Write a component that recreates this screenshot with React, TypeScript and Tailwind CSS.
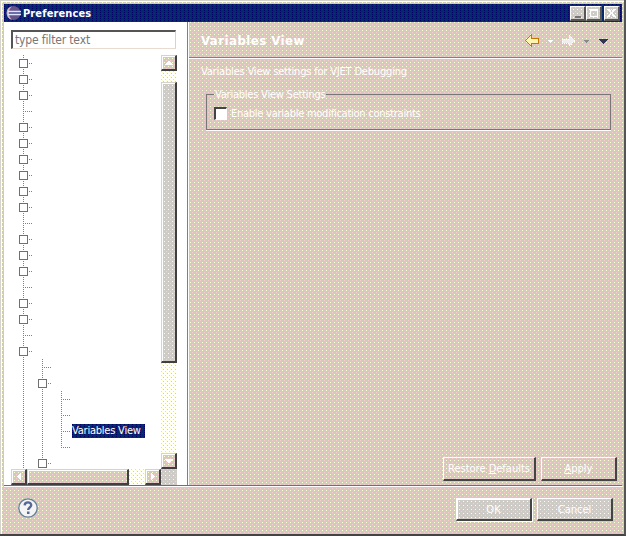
import type { ReactNode } from "react";

// Dithered fills of a 256-colour desktop.
const FACE =
  "bg-[#cecbc6] bg-[image:radial-gradient(circle_at_0.5px_0.5px,#ffcccc_0.6px,transparent_0.6px),radial-gradient(circle_at_0.5px_0.5px,#ffffcc_0.6px,transparent_0.6px)] bg-[length:4px_4px,4px_4px] bg-[position:0_0,2px_2px]";
const TRACK =
  "bg-white bg-[image:radial-gradient(circle_at_0.5px_0.5px,#ffcccc_0.6px,transparent_0.6px),radial-gradient(circle_at_0.5px_0.5px,#cccccc_0.6px,transparent_0.6px),radial-gradient(circle_at_0.5px_0.5px,#ffffcc_0.6px,transparent_0.6px)] bg-[length:4px_4px,4px_4px,4px_4px] bg-[position:0_0,2px_2px,1px_1px]";
const NAVY =
  "bg-[#03296a] bg-[image:radial-gradient(circle_at_0.5px_0.5px,#000066_0.6px,transparent_0.6px),radial-gradient(circle_at_0.5px_0.5px,#003399_0.6px,transparent_0.6px)] bg-[length:4px_2px,4px_4px] bg-[position:0_0,2px_1px]";
const RAISED =
  "border-t border-l border-t-[#d6d3ce] border-l-[#d6d3ce] border-r-[#404040] border-b-[#404040] border-r-2 border-b-2 shadow-[inset_1px_1px_0_#fff]";

type Row = { level: number; box?: boolean; label?: string };
const b = (level: number): Row => ({ level, box: true });
const n = (level: number): Row => ({ level });
const rows: Row[] = [
  b(0), b(0), b(0), n(0), b(0), b(0), b(0), b(0), b(0), b(0), n(0), b(0), b(0),
  b(0), n(0), b(0), b(0), n(0), b(0), n(1), b(1), n(2), n(2),
  { level: 2, label: "Variables View" }, n(2), b(1),
];

function TreeRow({ row, index }: { row: Row; index: number }) {
  const x = 12 + row.level * 19;
  return (
    <div className="flex h-4 shrink-0 items-center">
      <svg width={x + 11} height="16" className="shrink-0" shapeRendering="crispEdges">
        <g stroke="#808080" strokeDasharray="1 1" fill="none">
          <path d="M12.5 0V16" />
          {index >= 19 && <path d="M31.5 0V16" />}
          {row.level === 2 && <path d={index === 24 ? "M50.5 0V9" : "M50.5 0V16"} />}
          <path d={`M${x + 2} 8.5H${x + 10}`} />
        </g>
        {row.box && <rect x={x - 3.5} y="4.5" width="8" height="8" fill="#fff" stroke="#707070" />}
      </svg>
      {row.label && (
        <span className={`flex h-[14px] w-[73px] items-center text-[11px] whitespace-nowrap text-white ${NAVY}`}>
          <span className="tracking-[-0.22px]">{row.label}</span>
        </span>
      )}
    </div>
  );
}

function ScrollButton({ d }: { d: string }) {
  return (
    <div className={`h-4 w-4 shrink-0 ${FACE} ${RAISED}`}>
      <svg width="13" height="13" shapeRendering="crispEdges">
        <path d={d} fill="#fff" />
      </svg>
    </div>
  );
}

function Push({ className, children }: { className: string; children: ReactNode }) {
  return (
    <button className={`flex items-center justify-center text-[11px] leading-none whitespace-nowrap text-white ${FACE} border-t border-l border-t-white border-l-white border-r-2 border-b-2 border-r-[#444] border-b-[#444] ${className}`}>
      {children}
    </button>
  );
}

function Caption({ className = "", children }: { className?: string; children: ReactNode }) {
  return (
    <div className={`h-[15px] ${FACE} border-t border-l border-t-white border-l-white border-r-2 border-b-2 border-r-[#555] border-b-[#555] ${className}`}>
      <svg width="13" height="12" shapeRendering="crispEdges">{children}</svg>
    </div>
  );
}

export default function App() {
  return (
    <div className={`flex h-[536px] w-[626px] flex-col overflow-hidden border-r-2 border-b-2 border-r-[#555] border-b-[#444] pt-1 pl-1 font-['DejaVu_Sans_Condensed','DejaVu_Sans',sans-serif] [font-stretch:condensed] shadow-[inset_1px_1px_0_#d6d3ce,inset_2px_2px_0_#fff] ${FACE}`}>
      <header className={`mr-[2px] flex h-[18px] shrink-0 items-center ${NAVY}`}>
        <svg width="15" height="16" viewBox="0 0 15 16" className="ml-[2px]">
          <circle cx="7.5" cy="8" r="7" fill="#665588" />
          <path d="M6 1.2A7 7 0 0 0 6 14.8A9 9 0 0 1 6 1.2" fill="#d8b4c4" />
          <path d="M2 6.5H15M2 9.5H15" stroke="#dce4ff" strokeWidth="1.3" />
          <path d="M3 8H15" stroke="#5566aa" />
        </svg>
        <h1 className="ml-[2px] text-[11px] leading-none font-bold tracking-[0.12px] text-white">Preferences</h1>
        <div className="mr-[2px] ml-auto flex">
          <Caption className="w-4"><path d="M4 9H10V11H4Z" fill="#777" /></Caption>
          <Caption className="w-4"><path d="M3 2H11V10H3ZM4 4V9H10V4Z" fill="#fff" fillRule="evenodd" /></Caption>
          <Caption className="ml-[2px] w-4"><path d="M3 2L10 10M10 2L3 10" stroke="#fff" strokeWidth="1.8" /></Caption>
        </div>
      </header>

      <main className="mr-[2px] flex h-[463px] shrink-0">
        <aside className="flex w-[183px] shrink-0 flex-col bg-white pt-2 pl-[7px]">
          <input
            placeholder="type filter text"
            className="h-[19px] w-[165px] shrink-0 border-t-2 border-l-2 border-r border-b border-t-[#555] border-l-[#555] border-r-[#d6d3ce] border-b-[#e8dcd0] bg-white pl-[2px] text-[12px] tracking-[-0.15px] placeholder:text-[#777]"
          />
          <div className="mt-[6px] flex h-[414px] shrink-0">
            <div className="flex w-[150px] flex-col overflow-hidden">
              {rows.map((row, i) => <TreeRow key={i} row={row} index={i} />)}
            </div>
            <div className={`flex w-4 flex-col ${TRACK}`}>
              <ScrollButton d="M6 5H8V6H9V7H10V8H11V9H3V8H4V7H5V6H6Z" />
              <div className={`mt-[11px] h-[281px] ${FACE} ${RAISED}`} />
              <div className="mt-auto"><ScrollButton d="M3 5H11V6H10V7H9V8H8V9H6V8H5V7H4V6H3Z" /></div>
            </div>
          </div>
          <div className={`flex h-4 w-[166px] ${FACE}`}>
            <div className={`flex w-[150px] ${TRACK}`}>
              <ScrollButton d="M5 6H6V5H7V4H8V3H9V10H8V9H7V8H6V7H5Z" />
              <div className={`h-4 w-[102px] ${FACE} ${RAISED}`} />
              <div className="ml-auto"><ScrollButton d="M5 3H6V4H7V5H8V6H9V7H8V8H7V9H6V10H5Z" /></div>
            </div>
          </div>
        </aside>
        <div className="w-[2px] shrink-0 border-r border-l border-l-[#808080] border-r-white" />
        <section className="flex flex-1 flex-col text-[11px] leading-none text-white">
          <div className="flex h-[37px] shrink-0 items-center border-t border-b border-t-transparent border-b-white pl-3 shadow-[inset_0_-1px_0_#808080]">
            <h2 className="text-[13px] font-bold tracking-[0.5px]">Variables View</h2>
            <svg width="92" height="20" className="mr-[6px] ml-auto" shapeRendering="crispEdges">
              <path d="M1.5 9.5L7.5 3.5V7.5H14.5V12.5H7.5V15.5Z" fill="#fff3b0" stroke="#bf7900" />
              <path d="M24 9H29L26.5 12Z" fill="#fff" />
              <path d="M38 8H45V4L51 10L45 15V12H38Z" fill="#eeeeee" stroke="#fff" strokeDasharray="1 1" />
              <path d="M60 9H65L62.5 12Z" fill="#888" />
              <path d="M75 8H84L79.5 13Z" fill="#333355" />
            </svg>
          </div>
          <p className="mt-[6px] pl-3 leading-[13px] tracking-[-0.18px] whitespace-nowrap">Variables View settings for VJET Debugging</p>
          <fieldset className="mt-[10px] ml-[17px] h-[42px] w-[405px] border border-[#777] pl-[7px] shadow-[0_1px_0_#fff]">
            <legend className="px-[1px] leading-[13px] tracking-[-0.22px] whitespace-nowrap">Variables View Settings</legend>
            <label className="mt-[6px] flex items-center whitespace-nowrap">
              <span className="h-[13px] w-[13px] border-t-2 border-l-2 border-r border-b border-t-[#444] border-l-[#444] border-r-white border-b-white bg-white" />
              <span className="ml-[4px] tracking-[-0.25px]">Enable variable modification constraints</span>
            </label>
          </fieldset>
          <div className="mt-auto mb-1 flex justify-end gap-[5px] pr-[5px]">
            <Push className="h-6 w-[93px]"><span>Restore <u>D</u>efaults</span></Push>
            <Push className="h-6 w-[76px]"><span><u>A</u>pply</span></Push>
          </div>
        </section>
      </main>

      <footer className="mr-[2px] flex h-[49px] shrink-0 items-start border-t border-[#707070] pt-[12px] pl-[14px] shadow-[inset_0_1px_0_#fff]">
        <svg width="20" height="20" viewBox="0 0 20 20">
          <circle cx="10" cy="10" r="9.2" fill="#f4f4f4" stroke="#668099" strokeWidth="1.3" />
          <path d="M6.7 7.4C6.8 3.3 13.4 3.5 13.2 7.3C13.1 9.5 10.2 9.6 10.2 12" fill="none" stroke="#566994" strokeWidth="2.4" />
          <rect x="9" y="13.5" width="2.5" height="2.5" fill="#566994" />
        </svg>
        <div className="mr-[9px] ml-auto flex gap-[5px]">
          <Push className="h-[23px] w-[76px] shadow-[inset_1px_1px_0_#fff,1px_1px_0_#fff]">OK</Push>
          <Push className="h-[23px] w-[76px]">Cancel</Push>
        </div>
      </footer>
    </div>
  );
}
